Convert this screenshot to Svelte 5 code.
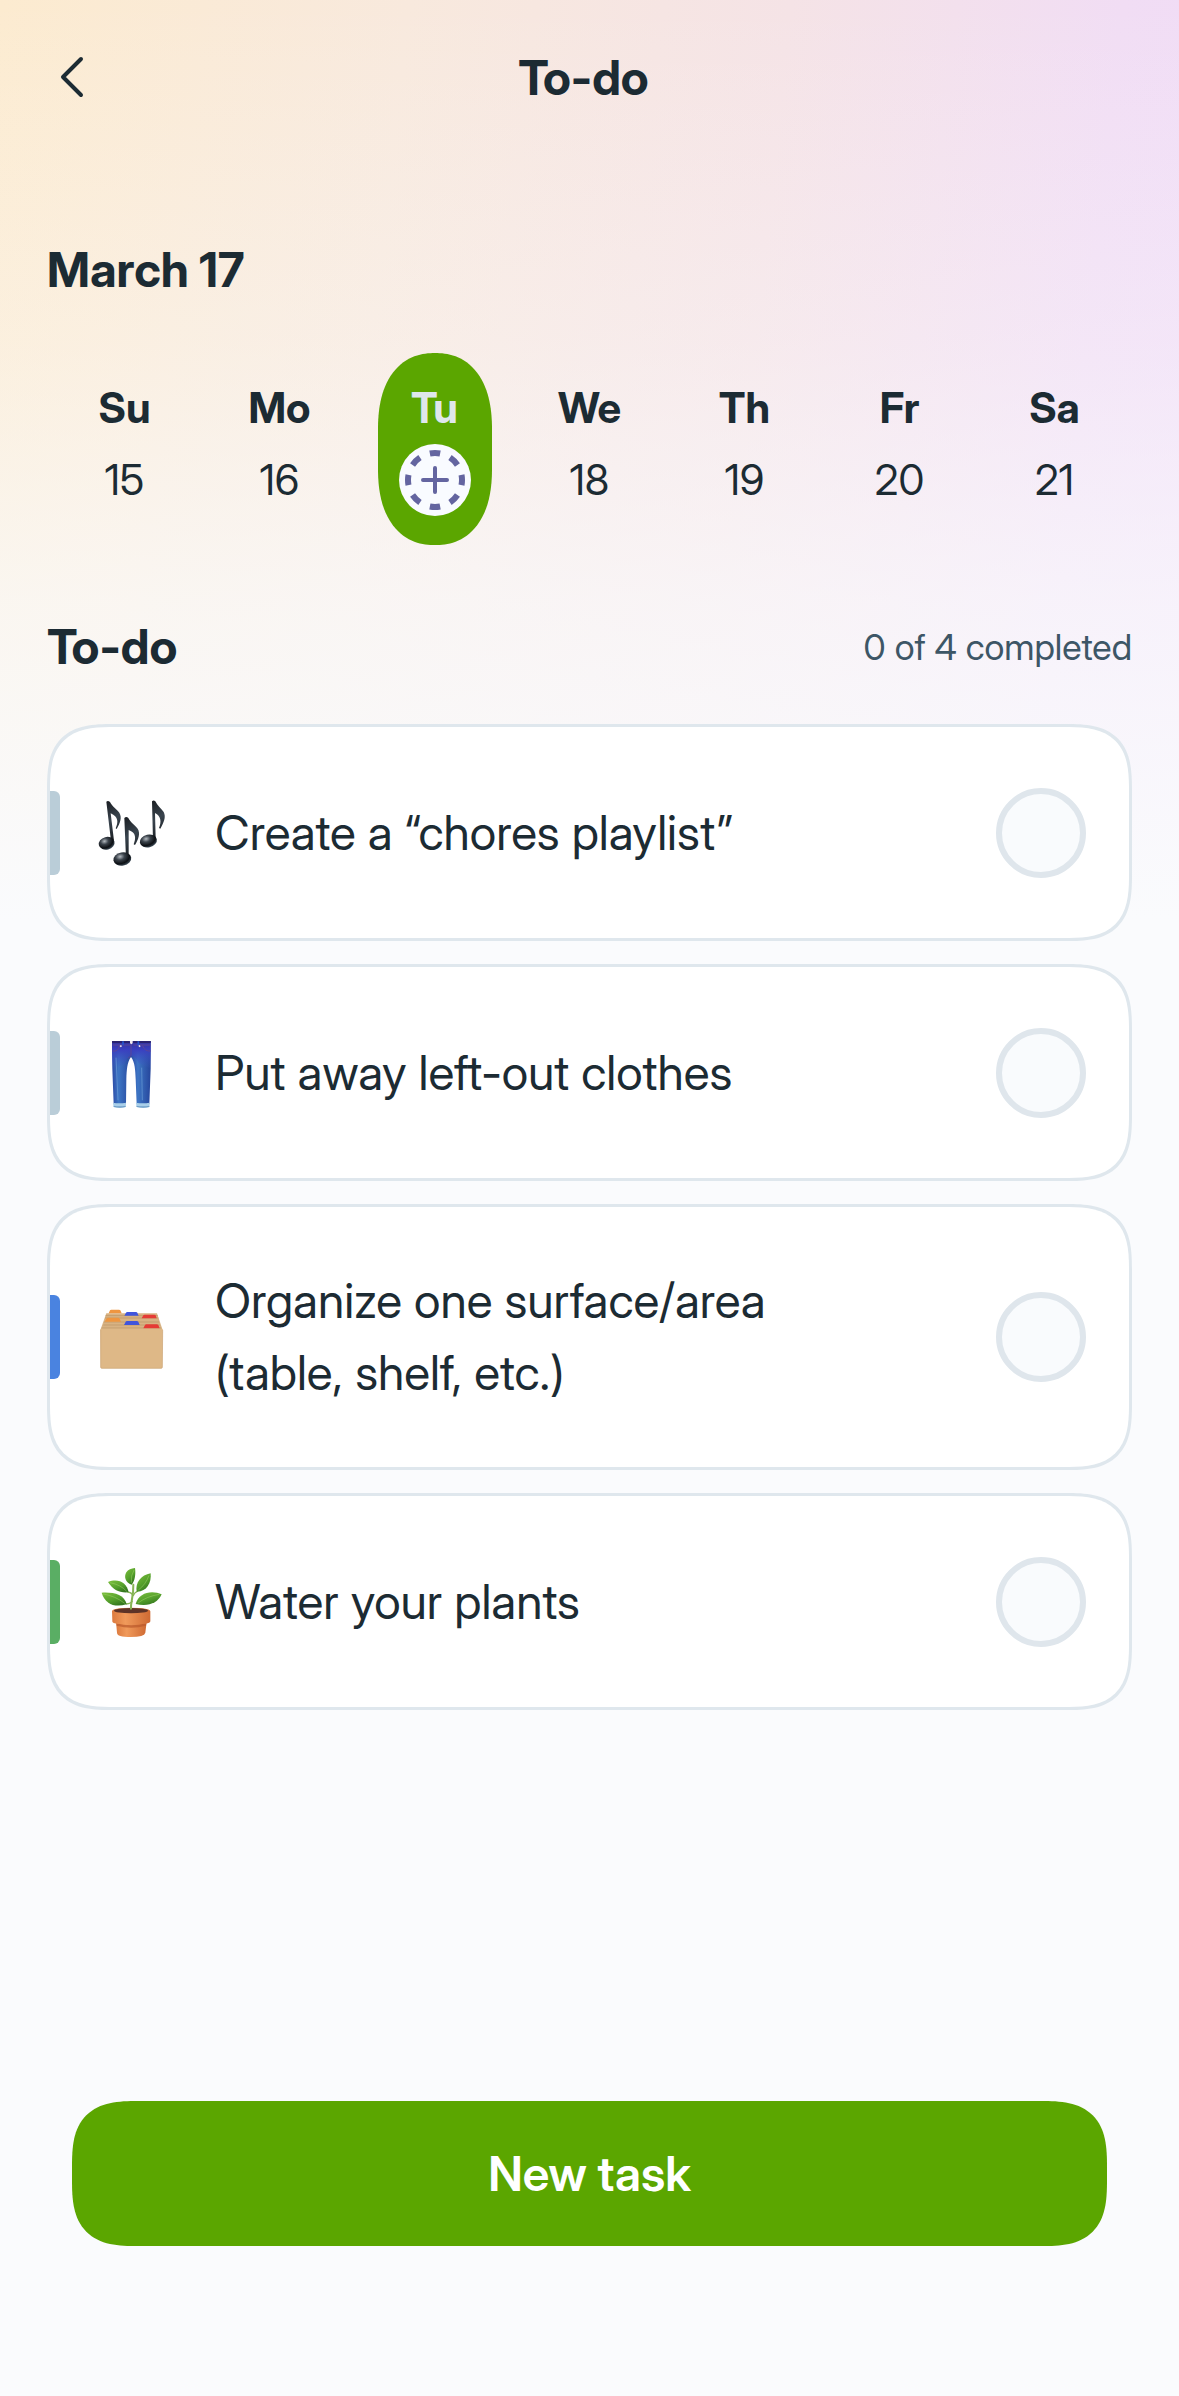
<script>
  const days = [
    { name: "Su", date: 15 },
    { name: "Mo", date: 16 },
    { name: "Tu", date: 17 },
    { name: "We", date: 18 },
    { name: "Th", date: 19 },
    { name: "Fr", date: 20 },
    { name: "Sa", date: 21 }
  ];

  let selected = 17;

  let tasks = [
    { id: "playlist", icon: "music", tone: "mist", text: "Create a “chores playlist”", done: false },
    { id: "clothes", icon: "jeans", tone: "mist", text: "Put away left-out clothes", done: false },
    { id: "organize", icon: "box", tone: "blue", text: "Organize one surface/area (table, shelf, etc.)", done: false },
    { id: "plants", icon: "plant", tone: "green", text: "Water your plants", done: false }
  ];

  $: completed = tasks.filter(task => task.done).length;

  function handleDayClick(date) {
    return function() {
      selected = date;
    };
  }
</script>

<div class="screen">
  <header class="top-bar">
    <button class="back-btn" aria-label="Back">
      <svg viewBox="0 0 24 44" width="24" height="44">
        <path d="M21 3 3 21 21 39" />
      </svg>
    </button>
    <h1>To-do</h1>
  </header>

  <h2 class="month">March {selected}</h2>

  <div class="week">
    {#each days as day}
      <button
        class="day"
        class:active={day.date == selected}
        on:click={handleDayClick(day.date)}>
        <span class="day-name">{day.name}</span>
        {#if day.date == selected}
          <svg class="day-badge" viewBox="0 0 72 72" width="72" height="72">
            <circle class="disc" cx="36" cy="36" r="36" />
            <circle class="dashes" cx="36" cy="36" r="27" pathLength="16" />
            <path class="plus" d="M36 24v24M24 36h24" />
          </svg>
        {:else}
          <span class="day-date">{day.date}</span>
        {/if}
      </button>
    {/each}
  </div>

  <div class="list-head">
    <h2>To-do</h2>
    <span class="count">{completed} of {tasks.length} completed</span>
  </div>

  <ul class="tasks">
    {#each tasks as task}
      <li class="task {task.tone}">
        {#if task.icon == "music"}
          <svg class="task-icon" viewBox="165 232 216 216">
            <defs>
              <radialGradient id="note-head" cx="0.4" cy="0.3" r="0.7">
                <stop offset="0" stop-color="#b4bac0" />
                <stop offset="0.35" stop-color="#3b434b" />
                <stop offset="0.75" stop-color="#0c0f13" />
                <stop offset="1" stop-color="#3a4854" />
              </radialGradient>
              <linearGradient id="note-stem" x1="0" y1="0" x2="0.2" y2="1">
                <stop offset="0" stop-color="#1a1d21" />
                <stop offset="0.5" stop-color="#39444e" />
                <stop offset="1" stop-color="#191d21" />
              </linearGradient>
            </defs>
            <g fill="url(#note-stem)">
              <path d="M199 246q5-5 11 1c6 13 21 22 28 32 9 15 2 31-8 49l-3-2c8-18 9-34-15-45l10 82q-3 9-8 9z" />
              <path d="M253 295q6-6 12 0c6 13 21 22 28 32 9 14 2 32-8 49l-4-2c7-18 8-35-15-43l0 76q-3 9-8 9z" />
              <path d="M336 245q5-5 10 0c6 13 18 22 25 32 8 15 0 32-10 50l-4-2c8-19 6-35-12-45l2 76q-3 9-8 9z" />
            </g>
            <g fill="url(#note-head)">
              <ellipse cx="200" cy="371" rx="24" ry="19" transform="rotate(-14 200 371)" />
              <ellipse cx="247" cy="418" rx="27" ry="20" transform="rotate(-10 247 418)" />
              <ellipse cx="325" cy="364" rx="26" ry="19" transform="rotate(-12 325 364)" />
            </g>
          </svg>
        {:else if task.icon == "jeans"}
          <svg class="task-icon" viewBox="165 228 216 216">
            <defs>
              <linearGradient id="denim">
                <stop offset="0" stop-color="#2c4aa5" />
                <stop offset="0.35" stop-color="#3d75c4" />
                <stop offset="1" stop-color="#26469c" />
              </linearGradient>
              <linearGradient id="denim-top" x1="0" y1="0" x2="0" y2="1">
                <stop offset="0" stop-color="#35329c" />
                <stop offset="0.3" stop-color="#3a3fc0" />
                <stop offset="1" stop-color="#3b5dc4" stop-opacity="0" />
              </linearGradient>
            </defs>
            <path fill="url(#denim)" d="M216 240h57v48c-12 16-13 40-14 66l-1 76h-37l-4-106z" />
            <path fill="url(#denim)" d="M273 240h59v84l-4 106h-38l-3-76c-1-26-2-50-14-66z" />
            <path fill="url(#denim-top)" d="M216 240h116v84l-36-18q-10-22-23-22-12 4-20 26l-37 14z" />
            <path fill="#2a2270" d="M216 240h51l7 5 7-5h51v6H216z" />
            <path fill="none" stroke="#5b4698" stroke-width="3" d="M217 270q18 3 22-17M332 270q-18 2-25-17M273 248v36l-9 8M218 252h52M280 252h51" />
            <path fill="none" stroke="#2555cf" stroke-width="5" d="M249 241v12M295 241v12" />
            <path fill="none" stroke="#6fa3da" stroke-width="3" opacity="0.6" d="M228 290l6 128M305 320l2 98" />
            <path fill="#f3e9ec" d="M270 240h8v7l-4 3-4-3zM239 255l4-3 3 4-4 3zM295 254l4-2 3 4-4 3z" />
            <path fill="#a9cfe9" d="M219 425q19 4 39 0l-1 13q-17 5-36 0zM288 425q20 4 41 0l-1 13q-18 5-38 0z" />
            <path fill="#6f9fc8" d="M221 434q18 4 36 0v4q-17 5-36 0zM289 434q19 4 39 0v4q-18 5-38 0z" />
          </svg>
        {:else if task.icon == "box"}
          <svg class="task-icon" viewBox="165 303 216 216">
            <path fill="#d8b384" d="M199 340h152l17 50H181z" />
            <path fill="none" stroke="#c39d6e" stroke-width="3" d="M197 347h156M195 354h160M192 366h165M190 375h169M185 384h178" />
            <path fill="#ef9640" d="M206 340l4-9q1-2 4-2h23q3 0 4 2l4 9zM194 365l5-9q2-3 5-3h30q4 0 5 3l4 9z" />
            <path fill="#4055dc" d="M253 347l5-9q1-2 4-2h26q3 0 4 2l4 9zM252 375l5-10q1-2 4-2h29q4 0 5 2l4 10z" />
            <path fill="#e53b35" d="M305 355l5-9q1-2 4-2h29q3 0 4 2l3 9zM310 385l5-10q1-2 4-2h31q4 0 5 2l4 10z" />
            <path fill="#deb887" d="M181 390q0-4 4-4h179q4 0 4 4l-1 112q0 3-4 3H186q-4 0-4-3z" />
            <path fill="none" stroke="#caa271" stroke-width="2" d="M182 390v112q0 3 4 3h177q4 0 4-3l1-112" />
          </svg>
        {:else}
          <svg class="task-icon" viewBox="165 228 216 216">
            <defs>
              <linearGradient id="leaf" x1="0" y1="0" x2="0.6" y2="1">
                <stop offset="0" stop-color="#7cbf3c" />
                <stop offset="0.6" stop-color="#55a02c" />
                <stop offset="1" stop-color="#35781f" />
              </linearGradient>
              <linearGradient id="clay">
                <stop offset="0" stop-color="#dc7a3e" />
                <stop offset="0.35" stop-color="#f09a5b" />
                <stop offset="1" stop-color="#cf6a33" />
              </linearGradient>
            </defs>
            <path fill="url(#clay)" d="M228 395h92l-4 33q-3 13-44 13t-41-13z" />
            <path fill="#b9592b" opacity="0.7" d="M229 400q45 12 90 0l-1 7q-44 12-88 0z" />
            <path fill="url(#clay)" d="M216 364q0-11 57-11t58 11v30q0 10-58 10t-56-10z" />
            <ellipse cx="273" cy="362" rx="51" ry="8" fill="#5d3327" />
            <path fill="none" stroke="#86b454" stroke-width="6" stroke-linecap="round" d="M273 356c-2-20 8-32 7-72" />
            <path fill="none" stroke="#86b454" stroke-width="4" d="M262 306q14 1 16 11M258 342q16-2 19-9M294 303q-12 5-15 15" />
            <g fill="url(#leaf)">
              <path d="M285 234c3 20-1 40-10 50-19-6-24-24-16-37 5-9 15-12 26-13z" />
              <path d="M332 250c3 30-13 56-42 55-5-27 13-50 42-55z" />
              <path d="M204 276c30-12 56 1 62 31-29 2-46-6-62-31z" />
              <path d="M185 308c35-2 68 5 75 35-35 10-64 1-75-35z" />
              <path d="M365 313c-29-14-69-6-78 29 38 8 66-2 78-29z" />
            </g>
            <path fill="none" stroke="#a4d56b" stroke-width="2" opacity="0.7" d="M282 240q-10 16-8 38M327 256q-10 28-32 44M210 278q32 6 50 26M190 312q36 6 64 28M358 313q-38 6-64 26" />
          </svg>
        {/if}
        <label for={task.id}>{task.text}</label>
        <input type="checkbox" id={task.id} bind:checked={task.done} />
      </li>
    {/each}
  </ul>

  <button class="new-task">New task</button>
</div>

<style>
  :global(body) {
    margin: 0;
    background-color: #fafbfd;
  }

  .screen {
    box-sizing: border-box;
    display: flex;
    flex-direction: column;
    min-height: 100vh;
    padding: 0 47px 150px;
    font-family: "Inter Display", Inter, "Liberation Sans", sans-serif;
    color: #1c2b33;
    background-image:
      linear-gradient(
        to bottom,
        rgba(250, 251, 253, 0) 0,
        rgba(250, 251, 253, 0.3) 340px,
        rgba(250, 251, 253, 0.7) 600px,
        #fafbfd 920px
      ),
      linear-gradient(96deg, #fcebd0 0, #f8e9dd 32%, #f5e3e6 62%, #f1ddf4 88%, #f0dcf7 100%);
    background-size: 100% 920px;
    background-repeat: no-repeat;
  }

  button {
    padding: 0;
    border: none;
    font-family: inherit;
    color: inherit;
    background: none;
    cursor: pointer;
  }

  h1,
  h2 {
    margin: 0;
    font-size: 48px;
    font-weight: 700;
    line-height: 60px;
  }

  .top-bar {
    display: grid;
    grid-template-columns: 60px 1fr 72px;
    align-items: center;
    height: 156px;
    text-align: center;
  }

  .back-btn {
    display: flex;
    padding-left: 13px;
  }

  .back-btn path {
    fill: none;
    stroke: #1c2b33;
    stroke-width: 4;
    stroke-linecap: round;
    stroke-linejoin: round;
  }

  .month {
    margin-top: 84px;
  }

  .week {
    display: grid;
    grid-template-columns: repeat(7, 1fr);
    justify-items: center;
    margin-top: 53px;
  }

  .day {
    display: flex;
    flex-direction: column;
    align-items: center;
    gap: 6px;
    width: 114px;
    padding: 25px 0 29px;
    border-radius: 57px / 76px;
    corner-shape: superellipse(1.2);
    font-size: 42px;
  }

  .day.active {
    color: #dfe7ec;
    background-color: #5ba600;
  }

  .day-name {
    font-weight: 700;
    line-height: 60px;
  }

  .day-date {
    line-height: 72px;
  }

  .disc {
    fill: #f9fbff;
  }

  .dashes {
    fill: none;
    stroke: #6465a0;
    stroke-width: 6;
    stroke-dasharray: 1 1;
    stroke-dashoffset: 0.5;
  }

  .plus {
    fill: none;
    stroke: #6465a0;
    stroke-width: 4;
    stroke-linecap: round;
  }

  .list-head {
    display: flex;
    align-items: center;
    justify-content: space-between;
    margin-top: 72px;
  }

  .count {
    font-size: 36px;
    color: #3d5666;
  }

  .tasks {
    display: flex;
    flex-direction: column;
    gap: 23px;
    margin: 47px 0;
    padding: 0;
    list-style: none;
  }

  .task {
    box-sizing: border-box;
    display: flex;
    align-items: center;
    gap: 48px;
    min-height: 217px;
    padding: 58px 43px 58px 45px;
    border: 3px solid #dfe7ed;
    border-radius: 66px;
    corner-shape: superellipse(1.5);
    background-color: #fff;
    position: relative;
  }

  /* category marker on the card's left edge */
  .task::before {
    content: "";
    position: absolute;
    left: 0;
    top: 50%;
    width: 10px;
    height: 84px;
    margin-top: -42px;
    border-radius: 0 6px 6px 0;
    background-color: #bacdd8;
  }

  .task.blue::before {
    background-color: #4a83e0;
  }

  .task.green::before {
    background-color: #5aae64;
  }

  .task-icon {
    flex: none;
    width: 72px;
    height: 72px;
  }

  .task label {
    flex: 1;
    max-width: 640px;
    font-size: 48px;
    line-height: 72px;
  }

  .task input {
    flex: none;
    box-sizing: border-box;
    width: 90px;
    height: 90px;
    margin: 0 0 0 auto;
    border: 6px solid #dfe6ec;
    border-radius: 50%;
    background-color: #f9fbfd;
    appearance: none;
    cursor: pointer;
  }

  .task input:checked {
    border-color: #5ba600;
    background-color: #5ba600;
  }

  .new-task {
    height: 145px;
    margin: auto 25px 0;
    border-radius: 66px;
    corner-shape: superellipse(1.5);
    font-size: 48px;
    font-weight: 600;
    color: #fff;
    background-color: #5ba600;
  }
</style>
